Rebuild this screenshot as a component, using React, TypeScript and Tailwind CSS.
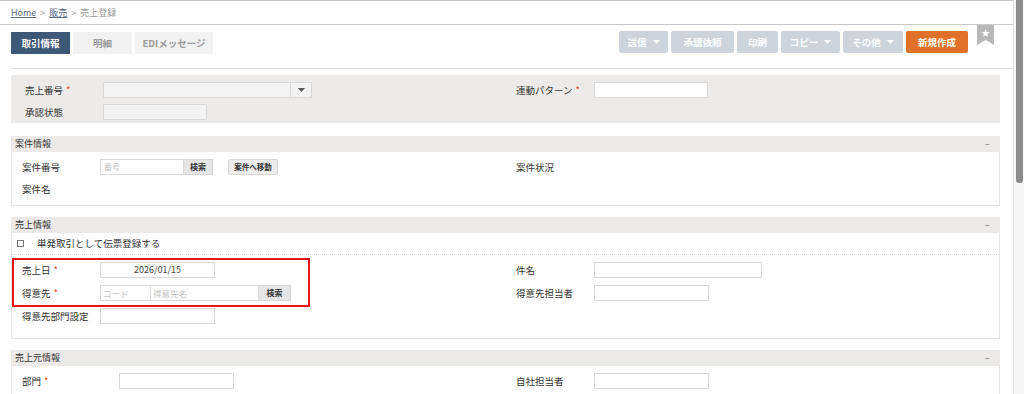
import React from "react";

const FONT = { fontFamily: '"Noto Sans CJK JP", "Noto Sans", sans-serif' };

function Req() {
  return <span className="text-[#e2412b] ml-[3px]">*</span>;
}

function Caret() {
  return (
    <svg width="7" height="4" viewBox="0 0 7 4" className="ml-[6px]">
      <path d="M0 0 H7 L3.5 4 Z" fill="#ffffff" />
    </svg>
  );
}

function Row({ label, req, children, lw = "w-[78px]" }: { label: string; req?: boolean; children?: React.ReactNode; lw?: string }) {
  return (
    <div className="flex items-center h-[16px]">
      <div className={`${lw} shrink-0 text-[9.5px] text-[#333]`}>
        {label}
        {req && <Req />}
      </div>
      {children}
    </div>
  );
}

function Input({ w, bg = "bg-white", children }: { w: string; bg?: string; children?: React.ReactNode }) {
  return <div className={`${w} h-[16px] border border-[#d9d9d9] ${bg} flex items-center text-[9px]`}>{children}</div>;
}

function SectionHeader({ title }: { title: string }) {
  return (
    <div className="h-[16px] bg-[#ebeae8] flex items-center justify-between pl-[4px] pr-[10px] text-[9px] text-[#333]">
      <span>{title}</span>
      <span className="text-[#777] text-[9px] leading-none">−</span>
    </div>
  );
}

function TopButton({ label, caret, w }: { label: string; caret?: boolean; w: string }) {
  return (
    <div className={`${w} h-[22px] rounded-[2px] bg-[#cdd4dc] text-white text-[9.5px] font-bold flex items-center justify-center`}>
      {label}
      {caret && <Caret />}
    </div>
  );
}

export default function App() {
  return (
    <div className="relative w-[1024px] h-[394px] overflow-hidden bg-white" style={FONT}>
      <div className="w-[1013px]">
        {/* breadcrumb */}
        <div className="border-t border-[#c4c4c4] border-b border-b-[#c8c8c8] h-[25px] flex items-center pl-[11px] text-[9px] text-[#999] gap-[4px]">
          <span className="underline text-[#5b6b7d]">Home</span>
          <span>&gt;</span>
          <span className="underline text-[#5b6b7d]">販売</span>
          <span>&gt;</span>
          <span>売上登録</span>
        </div>
        {/* toolbar */}
        <div className="flex items-start pl-[11px] pr-[19px] h-[43px]">
          <div className="flex gap-[3px] mt-[7px]">
            <div className="w-[59px] h-[22px] bg-[#3e5878] text-white font-bold text-[9.5px] flex items-center justify-center">取引情報</div>
            <div className="w-[59px] h-[22px] bg-[#f2f2f2] text-[#9a9a9a] font-bold text-[9.5px] flex items-center justify-center">明細</div>
            <div className="w-[78px] h-[22px] bg-[#f2f2f2] text-[#9a9a9a] font-bold text-[9.5px] flex items-center justify-center">EDIメッセージ</div>
          </div>
          <div className="ml-auto flex gap-[3px] mt-[6px]">
            <TopButton label="送信" caret w="w-[49px]" />
            <TopButton label="承認依頼" w="w-[63px]" />
            <TopButton label="印刷" w="w-[41px]" />
            <TopButton label="コピー" caret w="w-[59px]" />
            <TopButton label="その他" caret w="w-[60px]" />
            <div className="w-[62px] h-[22px] rounded-[2px] bg-[#e0712b] text-white text-[9.5px] font-bold flex items-center justify-center">新規作成</div>
          </div>
          <svg width="17" height="20" viewBox="0 0 17 20" className="ml-[9px] mt-0">
            <path d="M0 0 H17 V20 L8.5 15 L0 20 Z" fill="#b8b8b8" />
            <path d="M8.5 4 L9.6 6.8 L12.5 7 L10.3 8.9 L11 11.8 L8.5 10.2 L6 11.8 L6.7 8.9 L4.5 7 L7.4 6.8 Z" fill="#ffffff" />
          </svg>
        </div>
        <div className="ml-[11px] border-t border-[#e2e2e2]" />

        {/* content */}
        <div className="pl-[11px] pr-[13px] pt-[6px]">
          {/* section 1 */}
          <div className="h-[48px] bg-[#ecebe9] flex pt-[7px]">
            <div className="w-[494px] pl-[14px] flex flex-col gap-[6px]">
              <Row label="売上番号" req>
                <div className="w-[209px] h-[16px] border border-[#dadada] bg-[#f3f3f3] flex">
                  <div className="flex-1" />
                  <div className="w-[21px] border-l border-[#dadada] flex items-center justify-center">
                    <svg width="7" height="4" viewBox="0 0 7 4"><path d="M0 0 H7 L3.5 4 Z" fill="#555" /></svg>
                  </div>
                </div>
              </Row>
              <Row label="承認状態">
                <Input w="w-[104px]" bg="bg-[#f3f3f3]" />
              </Row>
            </div>
            <div className="pl-[11px]">
              <Row label="連動パターン" req>
                <Input w="w-[114px]" />
              </Row>
            </div>
          </div>

          {/* 案件情報 */}
          <div className="mt-[13px]">
            <SectionHeader title="案件情報" />
            <div className="h-[54px] border border-t-0 border-[#e6e6e6] flex pt-[7px]">
              <div className="w-[493px] pl-[10px] flex flex-col gap-[6px]">
                <Row label="案件番号">
                  <div className="w-[84px] h-[16px] border border-[#dadada] bg-white flex items-center pl-[3px] text-[8px] text-[#c4c4c4]">番号</div>
                  <div className="w-[29px] h-[16px] bg-[#e6e6e6] border border-[#d6d6d6] border-l-0 text-[8px] font-bold text-[#333] flex items-center justify-center">検索</div>
                  <div className="ml-[15px] w-[50px] h-[16px] bg-[#ececec] border border-[#d6d6d6] rounded-[2px] text-[7.5px] font-bold text-[#333] flex items-center justify-center">案件へ移動</div>
                </Row>
                <Row label="案件名" />
              </div>
              <div className="pl-[11px]">
                <Row label="案件状況" />
              </div>
            </div>
          </div>

          {/* 売上情報 */}
          <div className="mt-[11px] relative">
            <SectionHeader title="売上情報" />
            <div className="h-[106px] border border-t-0 border-[#e6e6e6]">
              <div className="h-[22px] flex items-center pl-[5px] border-b border-dotted border-[#d4d4d4]">
                <div className="w-[7px] h-[7px] border border-[#777] bg-white" />
                <span className="ml-[13px] text-[9.5px] text-[#333]">単発取引として伝票登録する</span>
              </div>
              <div className="flex pt-[7px]">
                <div className="w-[493px] pl-[10px] flex flex-col gap-[7px]">
                  <Row label="売上日" req>
                    <Input w="w-[115px]">
                      <span className="w-full text-center text-[9px] text-[#444]">2026/01/15</span>
                    </Input>
                  </Row>
                  <Row label="得意先" req>
                    <div className="w-[51px] h-[16px] border border-[#dadada] bg-white flex items-center pl-[2px] text-[8.5px] text-[#c4c4c4]">コード</div>
                    <div className="w-[108px] h-[16px] border border-l-0 border-[#dadada] bg-white flex items-center pl-[2px] text-[8.5px] text-[#c4c4c4]">得意先名</div>
                    <div className="w-[32px] h-[16px] bg-[#e6e6e6] border border-l-0 border-[#d6d6d6] text-[8px] font-bold text-[#333] flex items-center justify-center">検索</div>
                  </Row>
                  <Row label="得意先部門設定">
                    <Input w="w-[115px]" />
                  </Row>
                </div>
                <div className="pl-[11px] flex flex-col gap-[7px]">
                  <Row label="件名">
                    <Input w="w-[168px]" />
                  </Row>
                  <Row label="得意先担当者">
                    <Input w="w-[115px]" />
                  </Row>
                </div>
              </div>
            </div>
            <div className="absolute left-[1px] top-[41px] w-[298px] h-[49px] border-2 border-[#e8141a]" />
          </div>

          {/* 売上元情報 */}
          <div className="mt-[11px]">
            <SectionHeader title="売上元情報" />
            <div className="h-[40px] border border-t-0 border-[#e6e6e6] flex pt-[7px]">
              <div className="w-[493px] pl-[10px]">
                <Row label="部門" req lw="w-[97px]">
                  <Input w="w-[115px]" />
                </Row>
              </div>
              <div className="pl-[11px]">
                <Row label="自社担当者">
                  <Input w="w-[115px]" />
                </Row>
              </div>
            </div>
          </div>
        </div>
      </div>

      {/* scrollbar */}
      <div className="absolute right-0 top-0 w-[11px] h-full bg-[#f7f7f7] border-l border-[#e6e6e6]">
        <div className="ml-[2px] w-[7px] h-[183px] bg-[#8c8c8c] rounded-b-[3px]" />
      </div>
    </div>
  );
}
